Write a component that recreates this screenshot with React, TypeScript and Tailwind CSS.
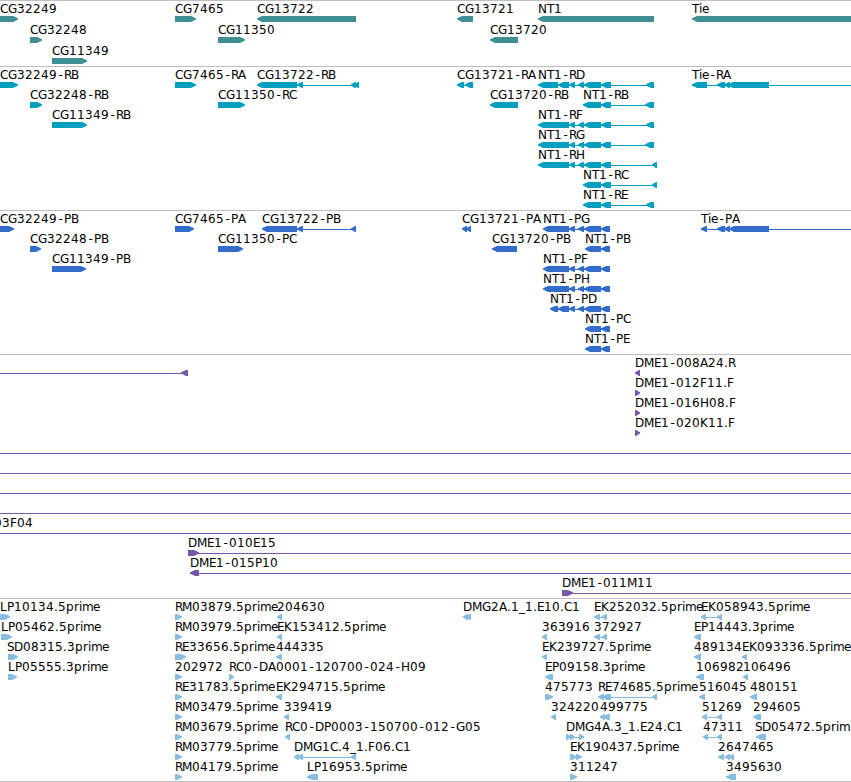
import React from "react";
import clsx from "clsx";

type Strand = "+" | "-";

interface Feature {
  // Text drawn above the glyph, empty when it starts outside the view
  name: string;
  x: number;
  strand: Strand;
  // Exon blocks as [start, end] pixel pairs
  blocks: [number, number][];
  // Extent of the intron line when it goes past the blocks
  line?: [number, number];
}

interface TrackData {
  id: string;
  color: string;
  rowClass: string;
  rows: Feature[][];
}

const VIEW_WIDTH = 851;
const BASELINE = 12;
const GLYPH_TOP = 15;
const GLYPH_HEIGHT = 6;
const HEAD = 5;

// Whole pixel advances for each character, digits are 8 wide
const ADVANCES: Record<string, number> = {
  A: 8, B: 7, C: 8, D: 9, E: 7, F: 7, G: 9, H: 9, K: 8, L: 7, M: 10,
  N: 9, P: 7, R: 7, S: 7, T: 7, "-": 7, ".": 4, _: 6,
  p: 8, r: 5, i: 3, m: 11, e: 7,
};

const f = (
  name: string,
  x: number,
  strand: Strand,
  blocks: [number, number][],
  line?: [number, number]
): Feature => ({ name, x, strand, blocks, line });

const NT1_MID: [number, number][] = [[569, 575], [578, 584], [584, 601], [601, 611]];
const NT1_CDS: [number, number][] = [[569, 575], [578, 584], [584, 601], [601, 610]];

const TRACKS: TrackData[] = [
  {
    id: "gene",
    color: "text-[#3f8e94]",
    rowClass: "h-[21px]",
    rows: [
      [
        f("CG32249", 0, "+", [[-5, 18]]),
        f("CG7465", 175, "+", [[175, 196]]),
        f("CG13722", 257, "-", [[257, 356]]),
        f("CG13721", 457, "-", [[457, 473]]),
        f("NT1", 538, "-", [[538, 654]]),
        f("Tie", 692, "-", [[692, 860]]),
      ],
      [
        f("CG32248", 30, "+", [[30, 42]]),
        f("CG11350", 218, "+", [[218, 245]]),
        f("CG13720", 490, "-", [[490, 518]]),
      ],
      [f("CG11349", 52, "+", [[52, 87]])],
    ],
  },
  {
    id: "transcript",
    color: "text-[#009ebf]",
    rowClass: "h-5",
    rows: [
      [
        f("CG32249-RB", 0, "+", [[-5, 18]]),
        f("CG7465-RA", 175, "+", [[175, 196]]),
        f("CG13722-RB", 257, "-", [[257, 297], [297, 303], [351, 356], [354, 359]]),
        f("CG13721-RA", 457, "-", [[457, 464], [465, 473]]),
        f("NT1-RD", 538, "-", [[538, 558], [558, 569], ...NT1_MID, [646, 654]]),
        f("Tie-RA", 692, "-", [[692, 707], [717, 725], [724, 730], [728, 769]], [692, 851]),
      ],
      [
        f("CG32248-RB", 30, "+", [[30, 42]]),
        f("CG11350-RC", 218, "+", [[218, 245]]),
        f("CG13720-RB", 490, "-", [[490, 518]]),
        f("NT1-RB", 583, "-", [[583, 601], [601, 611], [645, 654]]),
      ],
      [
        f("CG11349-RB", 52, "+", [[52, 87]]),
        f("NT1-RF", 538, "-", [[538, 569], ...NT1_MID, [646, 654]]),
      ],
      [f("NT1-RG", 538, "-", [[538, 569], ...NT1_MID, [645, 654]])],
      [f("NT1-RH", 538, "-", [[538, 569], ...NT1_MID, [652, 657]])],
      [f("NT1-RC", 583, "-", [[583, 601], [601, 611], [652, 657]])],
      [f("NT1-RE", 583, "-", [[583, 601], [601, 611], [646, 654]])],
    ],
  },
  {
    id: "cds",
    color: "text-[#326dcc]",
    rowClass: "h-5",
    rows: [
      [
        f("CG32249-PB", 0, "+", [[-5, 14]]),
        f("CG7465-PA", 175, "+", [[175, 194]]),
        f("CG13722-PB", 262, "-", [[262, 297], [297, 303], [351, 356]]),
        f("CG13721-PA", 462, "-", [[462, 467], [466, 471]]),
        f("NT1-PG", 543, "-", [[543, 569], ...NT1_CDS]),
        f("Tie-PA", 701, "-", [[701, 707], [717, 725], [724, 730], [729, 769]], [701, 851]),
      ],
      [
        f("CG32248-PB", 30, "+", [[30, 41]]),
        f("CG11350-PC", 218, "+", [[218, 243]]),
        f("CG13720-PB", 492, "-", [[492, 517]]),
        f("NT1-PB", 585, "-", [[585, 601], [601, 610]]),
      ],
      [
        f("CG11349-PB", 52, "+", [[52, 86]]),
        f("NT1-PF", 543, "-", [[543, 569], ...NT1_CDS]),
      ],
      [f("NT1-PH", 543, "-", [[543, 569], ...NT1_CDS])],
      [f("NT1-PD", 550, "-", [[550, 558], [558, 569], ...NT1_CDS])],
      [f("NT1-PC", 585, "-", [[585, 601], [601, 610]])],
      [f("NT1-PE", 585, "-", [[585, 601], [601, 610]])],
    ],
  },
  {
    id: "bac",
    color: "text-[#7758a8]",
    rowClass: "h-5",
    rows: [
      [
        f("", 0, "-", [[181, 188]], [-2, 188]),
        f("DME1-008A24.R", 635, "-", [[635, 640]]),
      ],
      [f("DME1-012F11.F", 635, "+", [[635, 640]])],
      [f("DME1-016H08.F", 635, "+", [[635, 640]])],
      [f("DME1-020K11.F", 635, "+", [[635, 640]])],
      [f("", 0, "+", [], [0, 851])],
      [f("", 0, "+", [], [0, 851])],
      [f("", 0, "+", [], [0, 851])],
      [f("", 0, "+", [], [0, 851])],
      [f("03F04", -6, "+", [], [0, 851])],
      [f("DME1-010E15", 188, "+", [[188, 199]], [188, 851])],
      [f("DME1-015P10", 190, "-", [[190, 199]], [190, 851])],
      [f("DME1-011M11", 562, "+", [[562, 573]], [562, 851])],
    ],
  },
  {
    id: "est",
    color: "text-[#89bddf]",
    rowClass: "h-5",
    rows: [
      [
        f("LP10134.5prime", 0, "+", [[0, 10]]),
        f("RM03879.5prime", 175, "+", [[175, 182]]),
        f("204630", 277, "-", [[277, 282]]),
        f("DMG2A.1_1.E10.C1", 463, "-", [[463, 468], [466, 471]]),
        f("EK252032.5prime", 594, "-", [[594, 600], [602, 607]]),
        f("EK058943.5prime", 701, "-", [[701, 706], [717, 722]]),
      ],
      [
        f("LP05462.5prime", 1, "+", [[1, 12]]),
        f("RM03979.5prime", 175, "+", [[175, 182]]),
        f("EK153412.5prime", 277, "-", [[277, 282]]),
        f("363916", 542, "-", [[542, 547]]),
        f("372927", 594, "-", [[594, 600], [602, 607]]),
        f("EP14443.3prime", 694, "-", [[694, 701]]),
      ],
      [
        f("SD08315.3prime", 7, "+", [[8, 18]]),
        f("RE33656.5prime", 175, "+", [[175, 186]]),
        f("444335", 276, "-", [[276, 282]]),
        f("EK239727.5prime", 542, "-", [[542, 547]]),
        f("489134", 694, "-", [[694, 701]]),
        f("EK093336.5prime", 742, "-", [[742, 747]]),
      ],
      [
        f("LP05555.3prime", 8, "+", [[8, 17]]),
        f("202972", 175, "+", [[175, 182]]),
        f("RC0-DA0001-120700-024-H09", 229, "+", [[229, 234]]),
        f("EP09158.3prime", 545, "-", [[545, 553]]),
        f("106982", 696, "-", [[696, 704]]),
        f("106496", 743, "-", [[743, 748]]),
      ],
      [
        f("RE31783.5prime", 175, "+", [[175, 182]]),
        f("EK294715.5prime", 276, "-", [[276, 282]]),
        f("475773", 545, "+", [[545, 553]]),
        f("RE74685.5prime", 598, "-", [[598, 604], [602, 611], [652, 657]]),
        f("516045", 699, "-", [[699, 705]]),
        f("480151", 750, "-", [[750, 757]]),
      ],
      [
        f("RM03479.5prime", 175, "+", [[175, 182]]),
        f("339419", 284, "-", [[284, 289]]),
        f("324220", 551, "-", [[551, 556]]),
        f("499775", 600, "-", [[600, 605], [603, 610]]),
        f("51269", 702, "-", [[702, 707], [717, 722]]),
        f("294605", 753, "-", [[753, 761]]),
      ],
      [
        f("RM03679.5prime", 175, "+", [[175, 182]]),
        f("RC0-DP0003-150700-012-G05", 285, "-", [[285, 290]]),
        f("DMG4A.3_1.E24.C1", 566, "+", [[566, 571], [570, 575], [579, 584]]),
        f("47311", 703, "-", [[703, 708], [717, 722]]),
        f("SD05472.5prim", 755, "-", [[756, 766]]),
      ],
      [
        f("RM03779.5prime", 175, "+", [[175, 182]]),
        f("DMG1C.4_1.F06.C1", 294, "-", [[294, 299], [298, 303], [351, 356]]),
        f("EK190437.5prime", 570, "+", [[570, 577], [576, 582]]),
        f("2647465", 718, "-", [[718, 724], [725, 730], [729, 734]]),
      ],
      [
        f("RM04179.5prime", 175, "+", [[175, 182]]),
        f("LP16953.5prime", 307, "-", [[307, 318]]),
        f("311247", 570, "+", [[570, 577]]),
        f("3495630", 726, "-", [[726, 736]]),
      ],
    ],
  },
];

// Running x position of every character of a label
const glyphPositions = (name: string, start: number) => {
  let x = start;
  return name
    .split("")
    .map((ch) => {
      // Hyphens sit in the middle of their wide cell
      const at = ch === "-" ? x + 1.5 : x;
      x += ADVANCES[ch] ?? 8;
      return at;
    })
    .join(" ");
};

// Block with a blunt pointed end in the direction of the strand
const blockPoints = ([start, end]: [number, number], strand: Strand) => {
  const top = GLYPH_TOP;
  const bottom = GLYPH_TOP + GLYPH_HEIGHT;
  const mid = GLYPH_TOP + GLYPH_HEIGHT / 2;
  const head = Math.min(HEAD, end - start - 1);
  const [back, tip, neck] =
    strand === "+" ? [start, end, end - head] : [end, start, start + head];
  return `${back},${top} ${neck},${top} ${tip},${mid - 0.8} ${tip},${mid + 0.6} ${neck},${bottom} ${back},${bottom}`;
};

const FeatureGlyph: React.FC<{ feature: Feature }> = ({ feature }) => {
  const { name, x, strand, blocks } = feature;
  const line =
    feature.line ?? [blocks[0][0] + 1, blocks[blocks.length - 1][1] - 1];

  return (
    <g>
      {(feature.line || blocks.length > 1) && (
        <rect
          x={line[0]}
          y={GLYPH_TOP + 3}
          width={line[1] - line[0]}
          height={1}
        />
      )}
      {blocks.map((block) => (
        <polygon key={block[0]} points={blockPoints(block, strand)} />
      ))}
      {name && (
        <text className="fill-black" x={glyphPositions(name, x)} y={BASELINE}>
          {name}
        </text>
      )}
    </g>
  );
};

const Track: React.FC<{ track: TrackData }> = ({ track }) => (
  <section
    className={clsx(
      "flex flex-col border-t border-[#bfbfbf]",
      track.id === "gene" || track.id === "est" ? "pb-[2px]" : "pb-[3px]",
      track.color
    )}
  >
    {track.rows.map((row, index) => (
      <div key={index} className={track.rowClass}>
        <svg
          className="block overflow-visible fill-current"
          width={VIEW_WIDTH}
          height={21}
        >
          {row.map((feature, i) => (
            <FeatureGlyph key={i} feature={feature} />
          ))}
        </svg>
      </div>
    ))}
  </section>
);

export default function App() {
  return (
    <main className="h-[782px] w-[851px] overflow-hidden border-b border-[#bfbfbf] bg-white font-['DejaVu_Sans',sans-serif] text-[12px]">
      {TRACKS.map((track) => (
        <Track key={track.id} track={track} />
      ))}
    </main>
  );
}
